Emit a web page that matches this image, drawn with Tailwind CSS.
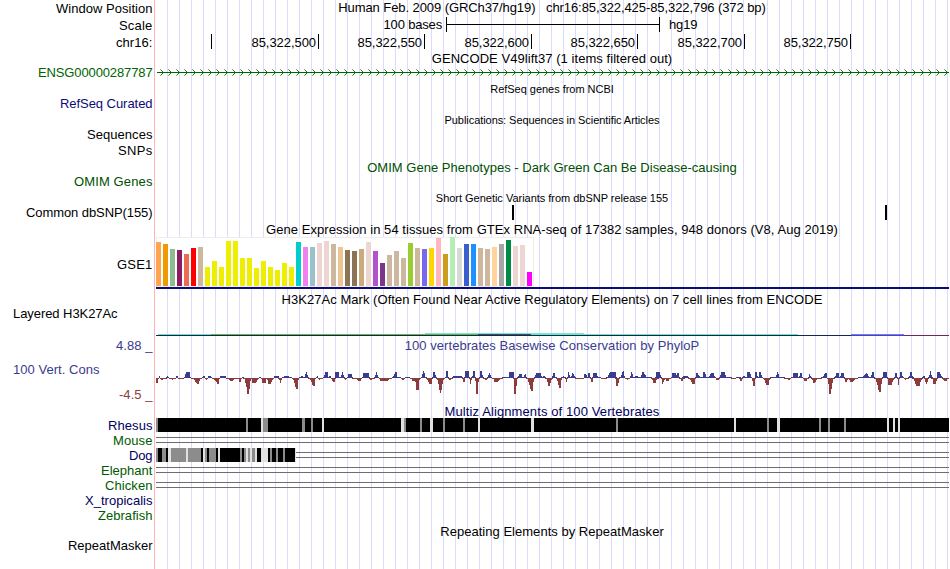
<!DOCTYPE html>
<html lang="en">
<head>
<meta charset="utf-8">
<title>Genome Browser</title>
<script src="https://cdn.jsdelivr.net/npm/@tailwindcss/browser@4"></script>
</head>
<body class="bg-white">
<main class="relative flex w-[950px] h-[569px] overflow-hidden bg-white text-black text-[13px] leading-[17px] whitespace-pre font-['Liberation_Sans',Arial,sans-serif]">
  <svg id="grid" class="absolute inset-0" width="950" height="569" shape-rendering="crispEdges"></svg>

  <section class="relative flex flex-col w-[155px] shrink-0 pr-[2.5px] text-right">
    <div class="h-[17px]"><span data-w="96">Window Position</span></div>
    <div class="h-[17px]"><span data-w="33">Scale</span></div>
    <div class="h-[17px]"><span data-w="36">chr16:</span></div>
    <div class="mt-[13px] h-[17px] text-[#006400]"><span data-w="114">ENSG00000287787</span></div>
    <div class="mt-[14px] h-[17px] text-[#0c0c78]"><span data-w="92">RefSeq Curated</span></div>
    <div class="mt-[14px] h-[17px]"><span data-w="65">Sequences</span></div>
    <div class="-mt-px h-[17px]"><span data-w="34">SNPs</span></div>
    <div class="mt-[14px] h-[17px] text-[#005000]"><span data-w="78">OMIM Genes</span></div>
    <div class="mt-[14px] h-[17px]"><span data-w="126">Common dbSNP(155)</span></div>
    <div class="mt-[35px] h-[17px]"><span data-w="35">GSE1</span></div>
    <div class="mt-[32px] h-[17px] pl-[13px] text-left"><span data-w="104">Layered H3K27Ac</span></div>
    <div class="mt-[15px] h-[17px] text-[#3c3c8c]"><span data-w="36">4.88 _</span></div>
    <div class="mt-[7px] h-[17px] pl-[13px] text-left text-[#3c3c8c]"><span data-w="86">100 Vert. Cons</span></div>
    <div class="mt-[8px] h-[17px] text-[#8c3c3c]"><span data-w="33">-4.5 _</span></div>
    <div class="mt-[15px] flex flex-col items-end leading-[15px] text-[#00005a]">
      <span data-w="44">Rhesus</span>
      <span data-w="39" class="text-[#005a00]">Mouse</span>
      <span data-w="23">Dog</span>
      <span data-w="51" class="text-[#005a00]">Elephant</span>
      <span data-w="47" class="text-[#005a00]">Chicken</span>
      <span data-w="67">X_tropicalis</span>
      <span data-w="54" class="text-[#005a00]">Zebrafish</span>
    </div>
    <div class="mt-[14px] h-[17px]"><span data-w="84">RepeatMasker</span></div>
  </section>

  <section class="relative flex flex-col w-[794px] shrink-0 text-center">
    <div class="h-[16px] leading-[16px]"><span data-w="427">Human Feb. 2009 (GRCh37/hg19)   chr16:85,322,425-85,322,796 (372 bp)</span></div>
    <div class="h-[18px] pt-px flex items-start leading-[16px]">
      <span class="w-[287px] text-right"><span data-w="58">100 bases</span></span>
      <span class="ml-[4px] w-[214px] h-[15px] border-x border-black flex items-center"><i class="block w-full h-px bg-black"></i></span>
      <span class="ml-[9px]"><span data-w="28">hg19</span></span>
    </div>
    <div class="h-[16px] flex text-right leading-[17px]">
      <div class="w-[57px] h-[15px] border-r border-black"></div>
      <div class="w-[107px] h-[15px] border-r border-black pr-[2px]"><span data-w="64">85,322,500</span></div>
      <div class="w-[106px] h-[15px] border-r border-black pr-[2px]"><span data-w="64">85,322,550</span></div>
      <div class="w-[107px] h-[15px] border-r border-black pr-[2px]"><span data-w="64">85,322,600</span></div>
      <div class="w-[106px] h-[15px] border-r border-black pr-[2px]"><span data-w="64">85,322,650</span></div>
      <div class="w-[107px] h-[15px] border-r border-black pr-[2px]"><span data-w="64">85,322,700</span></div>
      <div class="w-[106px] h-[15px] border-r border-black pr-[2px]"><span data-w="64">85,322,750</span></div>
    </div>
    <div class="h-[17px]"><span data-w="240">GENCODE V49lift37 (1 items filtered out)</span></div>
    <svg id="gene" class="block h-[14px]" width="794" height="14" viewBox="155 67 794 14" shape-rendering="crispEdges"></svg>
    <div class="h-[17px] text-[11px]"><span data-w="123" data-s="11">RefSeq genes from NCBI</span></div>
    <div class="mt-[14px] h-[17px] text-[11px]"><span data-w="215" data-s="11">Publications: Sequences in Scientific Articles</span></div>
    <div class="mt-[30px] h-[17px] text-[#005000]"><span data-w="369">OMIM Gene Phenotypes - Dark Green Can Be Disease-causing</span></div>
    <div class="mt-[14px] h-[15px] leading-[17px] text-[11px]"><span data-w="232" data-s="11">Short Genetic Variants from dbSNP release 155</span></div>
    <div class="h-[15px] flex"><i class="block ml-[357px] w-[2px] bg-black"></i><i class="block ml-[371px] w-[2px] bg-black"></i></div>
    <div class="h-[17px] leading-[19px]"><span data-w="572">Gene Expression in 54 tissues from GTEx RNA-seq of 17382 samples, 948 donors (V8, Aug 2019)</span></div>
    <svg id="gtex" class="block h-[53px]" width="794" height="53" viewBox="155 237 794 53" shape-rendering="crispEdges"></svg>
    <div class="mt-px h-[17px]"><span data-w="541">H3K27Ac Mark (Often Found Near Active Regulatory Elements) on 7 cell lines from ENCODE</span></div>
    <svg id="h3k" class="block mt-[22px] h-[7px]" width="794" height="7" viewBox="155 330 794 7" shape-rendering="crispEdges"></svg>
    <div class="h-[17px] text-[#3c3c8c]"><span data-w="294">100 vertebrates Basewise Conservation by PhyloP</span></div>
    <svg id="cons" class="block h-[49px]" width="794" height="49" viewBox="155 354 794 49" shape-rendering="crispEdges"></svg>
    <div class="h-[15px] leading-[17px] text-[#00005a]"><span data-w="215">Multiz Alignments of 100 Vertebrates</span></div>
    <svg id="align" class="block h-[105px]" width="794" height="105" viewBox="155 418 794 105" shape-rendering="crispEdges"></svg>
    <div class="h-[17px]"><span data-w="223">Repeating Elements by RepeatMasker</span></div>
  </section>
</main>
<script>
const rect = (x, y, w, h, c) => `<rect x="${x}" y="${y}" width="${w}" height="${h}" fill="${c}"/>`;
const put = (id, s) => { document.getElementById(id).innerHTML = s; };

// Guide lines
let s = rect(154, 0, 1, 569, '#ffb4b4');
for (let x = 167; x < 949; x += 12) s += rect(x, 0, 1, 569, '#dcdcfa');
put('grid', s);

// Gene strand arrows
s = rect(157, 72, 792, 1, '#006400');
for (let x = 160; x < 948; x += 8) {
  [[0, 3], [1, 2], [2, 1]].forEach(([dx, dy]) => {
    const c = dx ? '#147814' : '#78aa78';
    s += rect(x + dx, 72 - dy, 1, 1, c) + rect(x + dx, 72 + dy, 1, 1, c);
  });
}
put('gene', s);

// Tissue expression: [height, colour]
const Y = '#eeee00', T = '#cdb79e', P = '#eed5d2', B = '#8b7355';
const bars = [[44,'#ffa54f'],[42,'#ee9a00'],[37,'#8fbc8f'],[36,'#8b1c62'],[32,'#ee6a50'],[38,'#ff0000'],[39,T],
 [19,Y],[25,Y],[19,Y],[45,Y],[45,Y],[28,Y],[28,Y],[18,Y],[25,Y],[19,Y],[16,Y],[23,Y],[19,Y],
 [44,'#00cdcd'],[39,'#ee82ee'],[39,'#9ac0cd'],[43,P],[45,P],[42,T],[39,'#eec591'],[36,B],[35,B],[37,'#cdaa7d'],[44,P],
 [35,'#b452cd'],[23,'#7a378b'],[31,T],[35,T],[28,T],[43,'#9acd32'],[38,T],[37,'#7a67ee'],[38,'#ffd700'],[48,'#ffb6c1'],
 [32,'#cd9b1d'],[49,'#b4eeb4'],[38,'#d9d9d9'],[42,'#3a5fcd'],[42,'#1e90ff'],[38,T],[37,T],[39,'#ffd39b'],[42,'#a6a6a6'],
 [46,'#008b45'],[40,P],[41,P],[14,'#ff00ff']];
s = rect(156, 237, 378, 50, '#eeeeee') + rect(157, 238, 376, 48, '#ffffff');
bars.forEach(([h, c], i) => { s += rect(156 + 7 * i, 286 - h, 5, h, c); });
s += rect(156, 287, 793, 2, '#0c0c78');
put('gtex', s);

// Histone mark overlay
s = rect(156, 335, 748, 1, '#14284b') + rect(904, 335, 45, 1, '#6e285a') +
 rect(158, 334, 53, 1, '#69e1c8') + rect(211, 334, 267, 1, '#69b450') + rect(425, 333, 159, 1, '#78e6cd') +
 rect(478, 334, 53, 1, '#32506e') + rect(531, 334, 267, 1, '#69e6c8') + rect(851, 334, 53, 1, '#7878ff') + rect(851, 335, 53, 1, '#4646b4');
put('h3k', s);

// Conservation: [start, end, peakStart, peakEnd, height] in third-pixels from an origin
const groups = [
 [150, [[18,27,20,23,-5],[27,30,27,30,2],[32,50,35,37,-2],[50,56,52,54,2],[58,75,66,69,-2],[78,84,80,82,2],[84,101,90,96,-1],[102,123,108,119,6],
  [124,156,141,145,-6],[157,165,159,163,2],[166,173,168,170,-2],[174,185,174,183,2],[186,210,203,206,-6],[210,228,212,226,2],[229,262,243,246,-3],
  [262,276,269,272,-4],[277,281,278,279,1],[281,304,293,297,-16],[303,327,308,318,-5],[328,332,328,331,1],[333,350,338,346,-5],[348,372,356,362,-6],[373,386,374,385,2],
  [386,396,390,393,-5],[396,426,403,416,2],[426,447,438,442,-11],[447,460,453,459,2],[462,475,468,471,6],[475,498,489,493,-8],[498,504,501,502,2],[504,517,507,510,-2],
  [520,536,525,533,6],[537,543,539,541,2],[543,556,549,555,-4],[555,571,556,565,6],[571,583,576,579,6],[583,591,585,587,-2],[591,608,595,605,4],[608,636,627,631,-3],
  [636,659,640,656,5],[659,674,662,665,-2],[674,686,678,681,6],[687,726,692,714,-3],[726,744,735,739,6],[744,752,747,750,1],[753,765,757,760,-2],[766,780,769,773,1],[781,795,787,793,-3]]],
 [415, [[0,15,3,10,-12],[18,34,24,27,7],[34,53,42,51,-6],[52,65,55,59,6],[64,89,75,78,-15],[90,100,94,98,7],[101,112,104,108,-2],[113,143,115,140,2],[142,150,145,148,-4],
  [149,163,151,161,7],[163,171,165,168,-6],[170,181,176,179,7],[180,193,184,187,-16],[194,206,195,200,7],[205,217,210,214,-2],[217,231,222,225,5],[232,263,239,248,-4],[262,280,264,278,1],[278,297,284,296,6],
  [296,307,299,303,-16],[307,324,312,319,4],[324,336,330,333,4],[334,358,348,353,-13],[357,383,363,377,5],[382,392,385,389,2],[392,412,401,405,-8],[411,424,414,418,5],[423,441,432,437,-10],[440,453,444,447,2],
  [450,458,453,456,-4],[457,467,459,462,6],[467,483,471,474,5],[482,506,487,496,-1],[507,519,509,513,4],[518,527,521,524,5],[527,534,529,533,-4],[532,551,536,545,5],[551,558,552,556,1],[558,574,560,570,-1],
  [573,604,585,602,6],[602,615,605,609,-8],[613,630,624,627,7],[630,644,636,639,-2],[645,657,648,651,6],[658,672,662,668,2],[671,677,673,676,1],[676,700,682,686,6],[689,711,691,702,1],[708,730,715,721,-5],
  [720,739,725,735,6],[739,753,741,744,-6],[748,767,755,761,-3],[768,791,773,782,5],[784,794,788,791,5],[793,808,801,804,-3]]],
 [680, [[0,8,3,5,-3],[8,25,10,22,2],[25,47,38,44,-6],[47,66,49,52,5],[65,82,71,75,6],[83,108,93,101,5],[108,118,110,115,-2],[118,142,124,134,6],[141,155,144,150,1],[155,168,159,162,-1],[168,181,172,176,1],[179,189,182,185,-3],[188,198,190,194,2],
  [198,216,202,210,6],[216,227,219,224,-8],[225,235,226,230,6],[234,249,239,242,6],[249,272,258,265,-7],[272,286,277,280,1],[286,300,291,294,6],[301,315,305,309,1],[314,333,326,330,-2],[335,357,341,352,5],[356,368,360,364,5],
  [369,385,374,381,-3],[384,395,387,390,4],[394,415,401,405,-5],[415,424,418,422,-1],[423,441,436,439,5],[441,463,449,452,-16],[464,480,468,475,5],[479,495,484,490,5],[494,506,497,500,-4],[505,533,511,517,-4],
  [534,538,534,537,1],[541,570,558,561,5],[570,584,577,581,6],[584,609,597,601,-14],[608,624,611,620,6],[622,645,626,635,-7],[644,653,647,650,5],[652,658,654,657,-7],[657,672,661,664,6],[672,685,676,678,-2],[684,700,692,695,6],
  [698,729,708,718,-8],[728,735,730,733,2],[732,747,738,741,-6],[746,757,750,753,7],[755,773,761,768,-6],[771,789,773,779,6],[786,807,792,800,-3]]]
];
const up = new Array(950).fill(0), down = new Array(950).fill(0);
groups.forEach(([o, list]) => list.forEach(([a, b, p, q, h]) => {
  for (let x = o + Math.floor(a / 3); x <= o + Math.floor((b - 1) / 3) && x < 949; x++) {
    const z = (x - o) * 3 + 1.5;
    let k = z < p ? (z - a) / Math.max(p - a, 1) : z > q ? (b - z) / Math.max(b - q, 1) : 1;
    const near = Math.min(Math.abs(z - p), Math.abs(z - q));
    if (near <= 1) k = 1; else if (k < 1) k = Math.max(0, k) ** 1.6;
    const v = Math.max(1, Math.round(k * Math.abs(h)));
    if (h > 0) up[x] = Math.max(up[x], v); else down[x] = Math.max(down[x], v);
  }
}));
s = '';
for (let x = 156; x < 949; x++) {
  if (up[x]) s += rect(x, 378 - up[x], 1, up[x], '#3c3c8c');
  if (down[x] || !up[x]) s += rect(x, 378, 1, Math.max(1, down[x]), '#8c3c3c');
}
put('cons', s);

// Alignment blocks
const G = '#8c8c8c', L = '#e1e1e1', K = '#000000';
s = rect(156, 418, 793, 14, K);
[[156,2,G],[246,2,G],[261,2,L],[263,5,G],[302,3,G],[311,2,G],[322,2,L],[401,3,L],[404,2,G],[420,2,G],[430,3,L],[443,2,G],[463,2,G],[478,2,L],[531,3,L],
 [616,2,G],[734,2,L],[767,2,G],[777,3,L],[819,2,G],[828,2,G],[844,2,G],[887,2,L],[893,2,L],[898,2,L]].forEach(([x, w, c]) => { s += rect(x, 418, w, 14, c); });
[437, 442, 467, 472, 482, 487].forEach(y => { s += rect(156, y, 793, 1, '#6e6e6e'); });
[452, 457].forEach(y => { s += rect(296, y, 653, 1, '#6e6e6e'); });
s += rect(156, 448, 139, 14, K) + rect(295, 448, 1, 14, L);
[[156,2,G],[162,4,G],[168,3,L],[171,15,G],[186,2,L],[188,13,G],[203,2,L],[205,2,G],[209,7,G],[218,2,L],[240,2,G],[244,2,G],[246,2,L],[248,2,G],[250,2,L],[252,3,G],[255,2,L],
 [261,7,L],[270,2,G],[276,2,G],[283,2,G]].forEach(([x, w, c]) => { s += rect(x, 448, w, 14, c); });
put('align', s);

// Even out the tracking so every caption spans its intended width
const ctx = document.createElement('canvas').getContext('2d');
document.querySelectorAll('[data-w]').forEach(e => {
  ctx.font = (e.dataset.s || 13) + 'px "Liberation Sans", Arial, sans-serif';
  const w = ctx.measureText(e.textContent).width, n = e.textContent.length;
  e.style.letterSpacing = ((Number(e.dataset.w) + 0.5 - w) / n).toFixed(3) + 'px';
});
</script>
</body>
</html>
